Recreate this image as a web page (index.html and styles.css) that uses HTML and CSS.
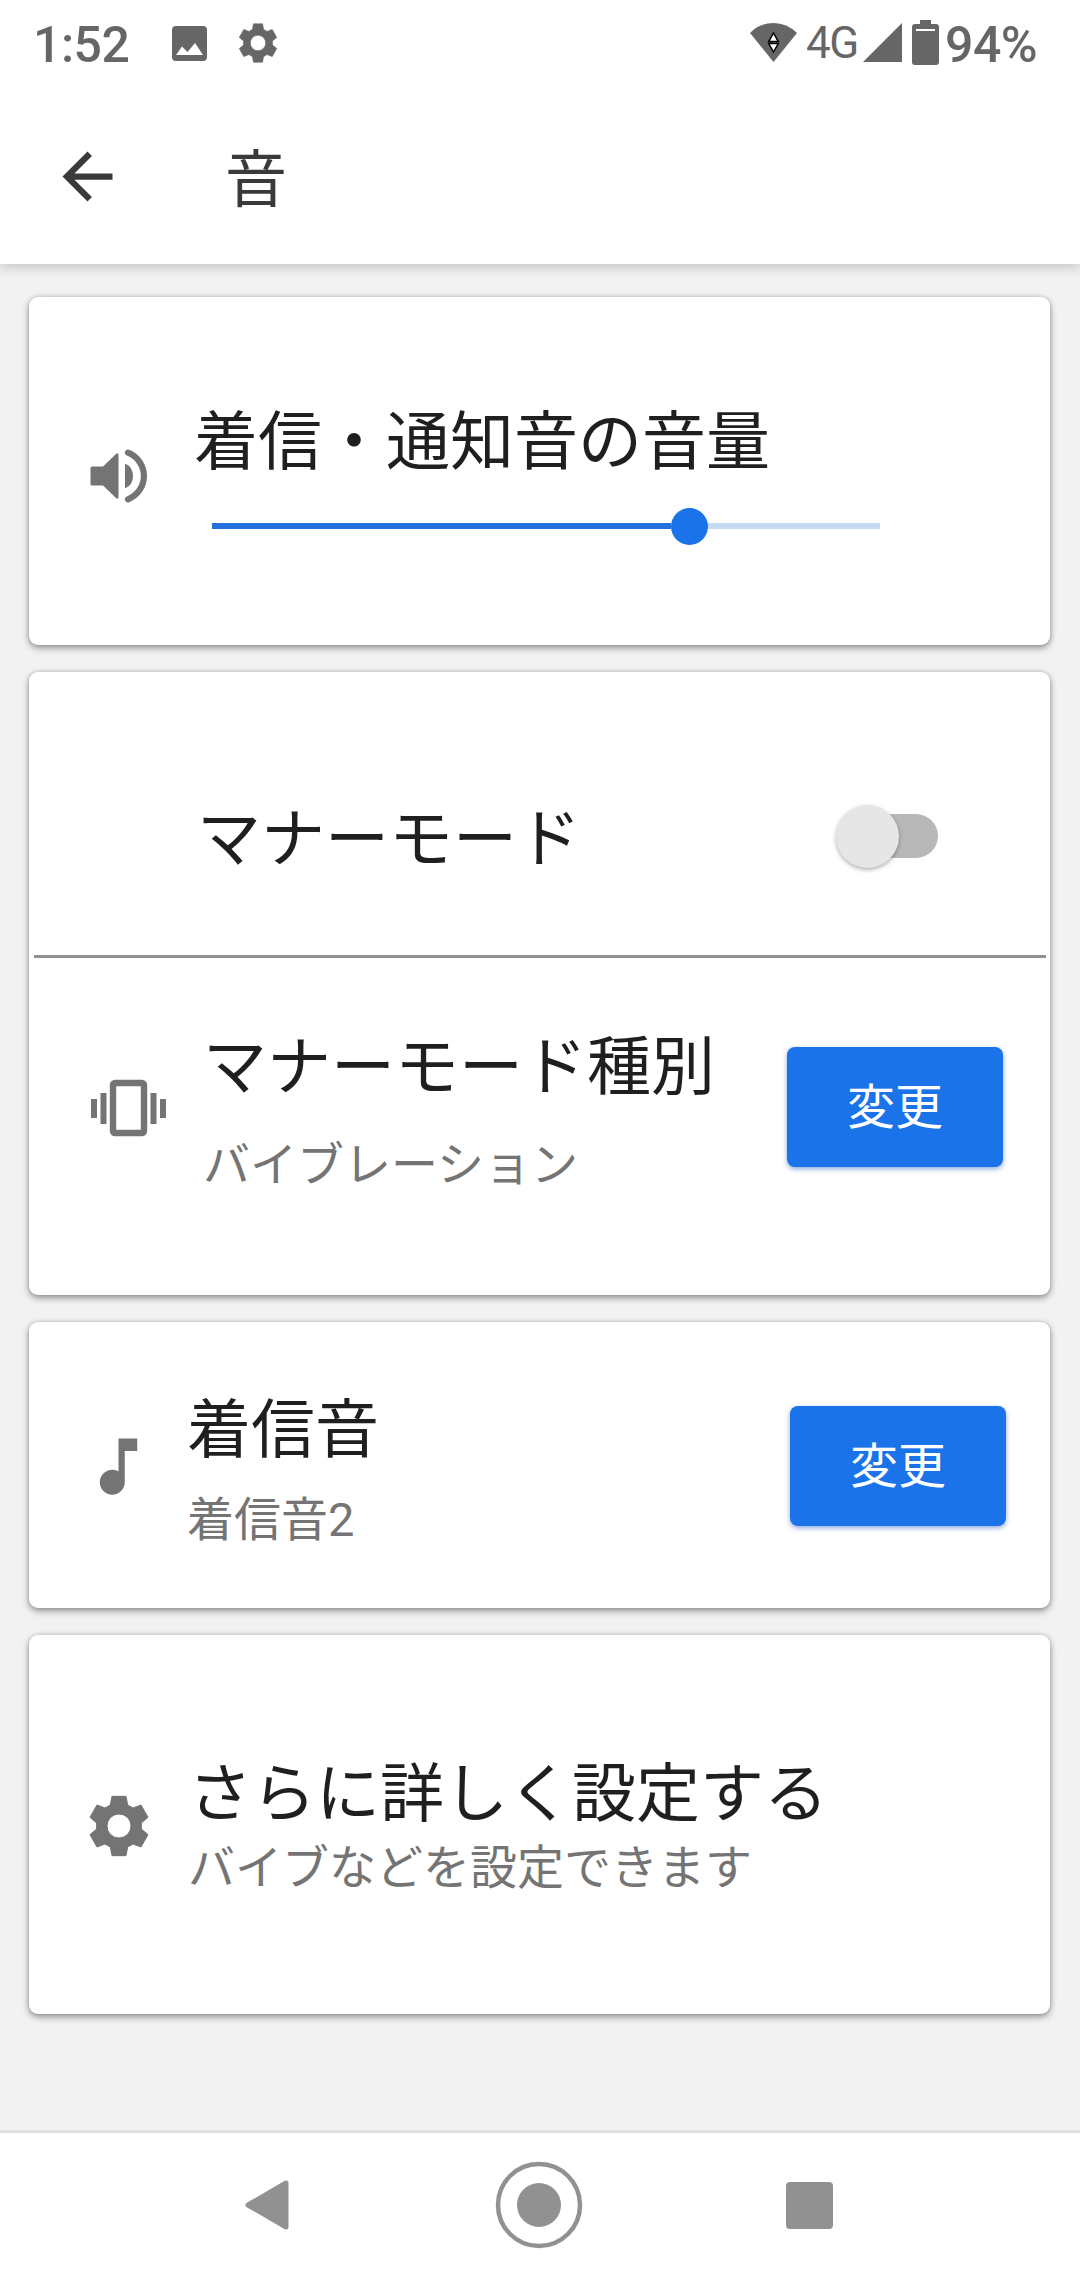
FILE: index.html
```html
<!DOCTYPE html>
<html lang="ja">
<head>
<meta charset="utf-8">
<title>音</title>
<link rel="stylesheet" href="styles.css">
</head>
<body>
<svg class="defs" width="0" height="0">
  <symbol id="gear" viewBox="-93 -93 186 186">
    <path fill-rule="evenodd" stroke="currentColor" stroke-width="3" stroke-linejoin="round" fill="currentColor" d="M-26-63-21-89H21L26-63 42-54 66-63 87-26 67-9V9L87 26 66 63 42 54 26 63 21 89H-21L-26 63-42 54-66 63-87 26-67 9V-9L-87-26-66-63-42-54ZM0-36A36 36 0 1 0 0 36 36 36 0 1 0 0-36Z"/>
  </symbol>
</svg>
<div class="screen">
  <header class="top">
    <div class="status">
      <span class="clock">1:52</span>
      <svg class="picture" width="35" height="35" viewBox="0 0 35 35"><path fill-rule="evenodd" fill="currentColor" d="M4 0H31Q35 0 35 4V31Q35 35 31 35H4Q0 35 0 31V4Q0 0 4 0ZM4 29H31L23 17 15.500 26 10 20.500Z"/></svg>
      <svg class="mini-gear" width="40" height="40"><use href="#gear"/></svg>
      <span class="spring"></span>
      <svg class="wifi" width="47" height="39" viewBox="0 0 47 39"><path fill="currentColor" d="M0 10Q10 0 23.500 0T47 10L23.500 39Z"/><path fill="#fff" stroke="#000" stroke-width="1.500" d="M23.500 10 28.300 18.600H18.700ZM23.500 29 28.300 20.600H18.700Z"/></svg>
      <span class="network">4G</span>
      <svg class="signal" width="39" height="39" viewBox="0 0 39 39"><path fill="currentColor" d="M39 0V39H0Z"/></svg>
      <svg class="battery" width="27" height="45" viewBox="0 0 27 45"><path fill="currentColor" d="M8 0H19V4H24Q27 4 27 7V42Q27 45 24 45H3Q0 45 0 42V7Q0 4 3 4H8Z"/><path fill="#fff" d="M4 9H23V11H4Z"/></svg>
      <span class="percent">94%</span>
    </div>
    <div class="appbar">
      <svg class="back" width="75" height="75" viewBox="0 0 24 24"><path fill="currentColor" d="M20 11H7.830l5.590-5.590L12 4l-8 8 8 8 1.410-1.410L7.830 13H20v-2z"/></svg>
      <h1 class="heading">音</h1>
    </div>
  </header>

  <main class="cards">
    <section class="card card-volume">
      <svg class="icon speaker" width="58" height="54" viewBox="0 0 58 54"><path fill="currentColor" d="M2 17.500H13L26 5Q28.500 3 28.500 6V48Q28.500 51 26 49L13 36.500H2Q.5 36.500.5 35V19Q.5 17.500 2 17.500ZM35 14.500Q43 18 43 27T35 39.500Z"/><path fill="none" stroke="currentColor" stroke-width="6.200" stroke-linecap="round" d="M38 3.700A25 25 0 0 1 38 50.300"/></svg>
      <div class="body">
        <h2 class="title">着信・通知音の音量</h2>
        <div class="slider"><span class="filled"></span><span class="thumb"></span><span class="rest"></span></div>
      </div>
    </section>

    <section class="card card-manner">
      <div class="row row-toggle">
        <h2 class="title">マナーモード</h2>
        <span class="toggle"><span class="knob"></span></span>
      </div>
      <hr class="divider">
      <div class="row row-kind">
        <svg class="icon vibrate" width="76" height="58" viewBox="0 0 76 58"><path fill="currentColor" d="M0 20H6V39H0ZM9.500 14H15.500V45H9.500ZM59.500 14H65.500V45H59.500ZM69 20H75V39H69Z"/><rect x="22" y="4" width="31" height="50" rx="2" fill="none" stroke="currentColor" stroke-width="6.400"/></svg>
        <div class="body">
          <h2 class="title">マナーモード種別</h2>
          <p class="sub">バイブレーション</p>
        </div>
        <button class="change">変更</button>
      </div>
    </section>

    <section class="card card-ringtone">
      <svg class="icon note" width="75" height="75" viewBox="0 0 24 24"><path fill="currentColor" d="M12 3v10.550c-.59-.34-1.270-.55-2-.55-2.210 0-4 1.790-4 4s1.790 4 4 4 4-1.790 4-4V7h4V3h-6z"/></svg>
      <div class="body">
        <h2 class="title">着信音</h2>
        <p class="sub">着信音2</p>
      </div>
      <button class="change">変更</button>
    </section>

    <section class="card card-more">
      <svg class="icon big-gear" width="62" height="62"><use href="#gear"/></svg>
      <div class="body">
        <h2 class="title">さらに詳しく設定する</h2>
        <p class="sub">バイブなどを設定できます</p>
      </div>
    </section>
  </main>

  <nav class="navbar">
    <svg width="44" height="50" viewBox="0 0 44 50"><path fill="currentColor" stroke="currentColor" stroke-width="5" stroke-linejoin="round" d="M41 3V47L3 25Z"/></svg>
    <svg class="home" width="88" height="88" viewBox="-44 -44 88 88"><circle r="41" fill="none" stroke="currentColor" stroke-width="4.500"/><circle r="22" fill="currentColor"/></svg>
    <svg width="47" height="47" viewBox="0 0 47 47"><rect width="47" height="47" rx="4" fill="currentColor"/></svg>
  </nav>
</div>
</body>
</html>
```
FILE: styles.css
```css
* { box-sizing: border-box; }
body, h1, h2, p { margin: 0; }
body { background: #f2f2f2; font-family: Roboto, "Noto Sans CJK JP", sans-serif; }
svg { display: block; flex: none; }
.defs { position: absolute; }

.screen { width: 1080px; height: 2280px; display: flex; flex-direction: column; overflow: hidden; }

.top { height: 264px; flex: none; background: #fff; box-shadow: 0 3px 12px rgba(0,0,0,.2); }
.status { height: 88px; display: flex; align-items: flex-start; padding: 0 44px 0 33px; color: #666; }
.clock, .percent { font-size: 50px; font-weight: 500; line-height: 58px; margin-top: 16px; white-space: nowrap; letter-spacing: -.5px; }
.clock { width: 139px; }
.picture { margin-top: 26px; }
.mini-gear { margin: 23px 0 0 31px; }
.spring { flex: 1; }
.wifi { margin-top: 23px; }
.network { width: 57px; margin: 18px 0 0 9px; font-size: 44px; line-height: 50px; letter-spacing: -1.5px; }
.signal { margin-top: 23px; }
.battery { margin: 20px 0 0 10px; }
.percent { width: 91px; margin-left: 6px; }

.appbar { display: flex; align-items: center; height: 177px; padding-left: 50px; color: #3a3a3a; }
.heading { margin-left: 100px; font-size: 62px; line-height: 80px; font-weight: 400; padding-top: 8px; }

.cards { flex: 1; display: flex; flex-direction: column; gap: 27px; padding: 33px 30px 0 29px; }
.card { background: #fff; border-radius: 9px; box-shadow: 0 3px 7px rgba(0,0,0,.38), 0 0 4px rgba(0,0,0,.16); display: flex; align-items: flex-start; color: #747474; }
.title { font-size: 64px; line-height: 80px; font-weight: 400; color: #1f1f1f; white-space: nowrap; }
.sub { font-size: 47px; line-height: 60px; color: #747474; white-space: nowrap; }

.card-volume { height: 348px; padding-left: 61px; }
.speaker { margin-top: 152px; }
.card-volume .body { margin: 106px 0 0 46px; width: 686px; }
.slider { display: flex; align-items: center; height: 38px; margin: 24px 0 0 18px; }
.filled { width: 460px; height: 6px; background: #2470de; }
.thumb { width: 37px; height: 37px; border-radius: 50%; background: #1a73e8; }
.rest { width: 172px; height: 6px; background: #c6daf1; }

.card-manner { height: 623px; flex-direction: column; align-items: stretch; }
.row { display: flex; align-items: flex-start; }
.row-toggle { height: 283px; padding: 128px 112px 0 168px; justify-content: space-between; }
.toggle { width: 98px; height: 44px; margin-top: 14px; border-radius: 22px; background: #b8b8b8; }
.knob { display: block; width: 63px; height: 63px; margin: -9px 0 0 -4px; border-radius: 50%; background: #e6e6e6; box-shadow: 0 2px 4px rgba(0,0,0,.3); }
.divider { width: 1012px; height: 3px; margin: 0 0 0 5px; border: 0; background: #919191; }
.row-kind { padding-left: 62px; }
.vibrate { margin-top: 121px; }
.row-kind .body { width: 584px; margin: 70px 0 0 36px; }
.row-kind .sub { margin-top: 27px; }
.change { width: 216px; height: 120px; padding: 2px 0 0; border: 0; border-radius: 8px; background: #1a73e8; color: #fff; font: 400 48px/118px Roboto, "Noto Sans CJK JP", sans-serif; box-shadow: 0 2px 5px rgba(26,80,180,.5); }
.row-kind .change { margin-top: 89px; }

.card-ringtone { height: 286px; padding-left: 52px; }
.note { margin-top: 107px; }
.card-ringtone .body { width: 603px; margin: 69px 0 0 31px; }
.card-ringtone .sub { margin-top: 19px; }
.card-ringtone .change { margin-top: 84px; }

.card-more { height: 379px; padding-left: 59px; }
.big-gear { margin-top: 160px; }
.card-more .body { margin: 120px 0 0 38px; }
.card-more .sub { margin-top: 3px; }

.navbar { height: 150px; flex: none; display: flex; justify-content: space-between; align-items: center; padding: 0 247px 3px 245px; border-top: 3px solid #e0e0e0; background: #fff; color: #919191; }
.home { margin-left: 3px; }
```
